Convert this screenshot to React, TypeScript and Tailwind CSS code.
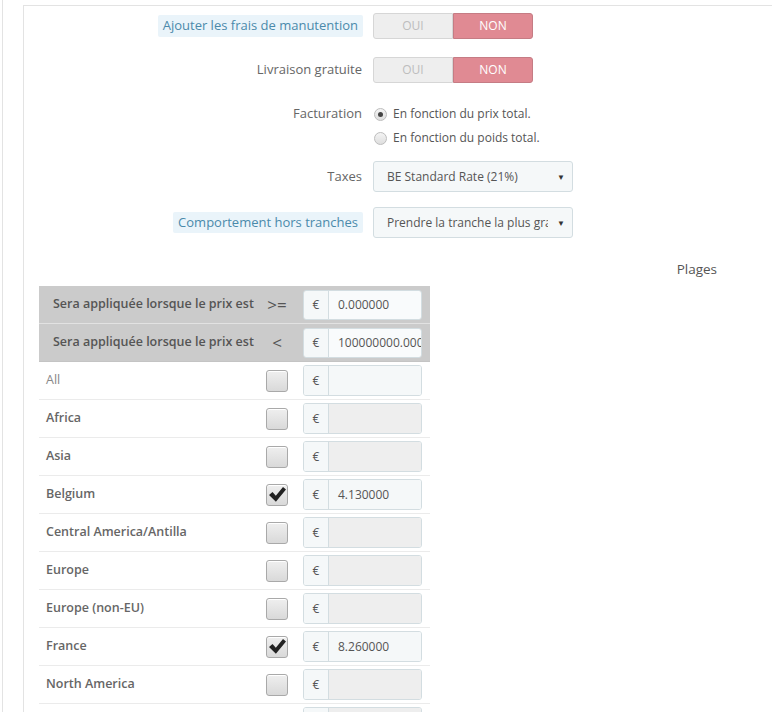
import React from "react";

type Zone = { name: string; bold: boolean; checked: boolean; value: string; disabled: boolean };

const zones: Zone[] = [
  { name: "All", bold: false, checked: false, value: "", disabled: false },
  { name: "Africa", bold: true, checked: false, value: "", disabled: true },
  { name: "Asia", bold: true, checked: false, value: "", disabled: true },
  { name: "Belgium", bold: true, checked: true, value: "4.130000", disabled: false },
  { name: "Central America/Antilla", bold: true, checked: false, value: "", disabled: true },
  { name: "Europe", bold: true, checked: false, value: "", disabled: true },
  { name: "Europe (non-EU)", bold: true, checked: false, value: "", disabled: true },
  { name: "France", bold: true, checked: true, value: "8.260000", disabled: false },
  { name: "North America", bold: true, checked: false, value: "", disabled: true },
  { name: "Oceania", bold: true, checked: false, value: "", disabled: true },
];

const Toggle = () => (
  <div className="flex h-[26px] w-[160px] text-[12px]">
    <div className="flex w-[80px] items-center justify-center rounded-l-[3px] border border-[#d6d6d6] bg-[#eeeeee] text-[#bdbdbd]">
      OUI
    </div>
    <div className="flex w-[80px] items-center justify-center rounded-r-[3px] border border-[#c57c84] bg-[#e08a93] text-white">
      NON
    </div>
  </div>
);

const Radio = ({ on }: { on?: boolean }) => (
  <span className="flex h-[13px] w-[13px] items-center justify-center rounded-full border border-[#bdbdbd] bg-gradient-to-b from-[#f4f4f4] to-[#dedede]">
    {on && <span className="h-[5px] w-[5px] rounded-full bg-[#444]" />}
  </span>
);

const Select = ({ text }: { text: string }) => (
  <div className="flex h-[31px] w-[200px] items-center rounded-[3px] border border-[#d3dde1] bg-[#f5f8f9] pl-[13px] pr-[7px] text-[12px] text-[#555]">
    <span className="w-[161px] overflow-hidden whitespace-nowrap">{text}</span>
    <span className="ml-auto text-[8px] text-[#333]">▼</span>
  </div>
);

const Check = ({ on }: { on: boolean }) => (
  <div className="flex h-[22px] w-[22px] items-center justify-center rounded-[3px] border border-[#a9a9a9] bg-gradient-to-b from-[#efefef] to-[#d9d9d9] shadow-[inset_0_1px_0_#fff]">
    {on && (
      <svg width="19" height="17" viewBox="0 0 19 17">
        <path d="M1 9 L4.5 6 L7.8 9.8 L15 1 L18 3.6 L7.9 15.8 Z" fill="#222" />
      </svg>
    )}
  </div>
);

const Price = ({ value, bg, h }: { value: string; bg: string; h: string }) => (
  <div className={`flex ${h} w-[119px] overflow-hidden rounded-[3px] border border-[#d3dde1] text-[12px] text-[#555]`}>
    <span className="flex w-[25px] shrink-0 items-center justify-center border-r border-[#d3dde1] bg-[#f5f8f9]">€</span>
    <span className={`flex flex-1 items-center overflow-hidden whitespace-nowrap pl-[9px] ${bg}`}>{value}</span>
  </div>
);

const FormRow = ({ label, hint, children, cls }: { label: string; hint?: boolean; children: React.ReactNode; cls: string }) => (
  <div className={`flex items-center ${cls}`}>
    <div className="flex w-[339px] justify-end text-[13px]">
      {hint ? (
        <span className="rounded-[2px] bg-[#eaf4fa] px-[5px] py-[1px] text-[#4a8aab]">{label}</span>
      ) : (
        <span className="pr-[1px] text-[#666]">{label}</span>
      )}
    </div>
    <div className="ml-[10px]">{children}</div>
  </div>
);

export default function App() {
  return (
    <div
      className="flex h-[712px] w-[772px] overflow-hidden bg-white"
      style={{ fontFamily: '"Open Sans", "Liberation Sans", sans-serif' }}
    >
      <div className="w-[2px] shrink-0" />
      <div className="flex flex-1 border-l border-[#e3e3e3] pl-[20px]">
        <div className="mt-[5px] flex-1 border-l border-t border-[#e3e3e3]">
          <FormRow label="Ajouter les frais de manutention" hint cls="mt-[7px] h-[26px]">
            <Toggle />
          </FormRow>
          <FormRow label="Livraison gratuite" cls="mt-[18px] h-[26px]">
            <Toggle />
          </FormRow>

          <div className="mt-[19px] flex">
            <div className="flex h-[24px] w-[339px] items-center justify-end text-[13px] text-[#666]">
              <span className="pr-[1px]">Facturation</span>
            </div>
            <div className="ml-[11px] text-[12px] text-[#555]">
              <div className="flex h-[24px] items-center gap-[6px]">
                <Radio on />
                <span>En fonction du prix total.</span>
              </div>
              <div className="flex h-[24px] items-center gap-[6px]">
                <Radio />
                <span>En fonction du poids total.</span>
              </div>
            </div>
          </div>

          <FormRow label="Taxes" cls="mt-[11px] h-[31px]">
            <Select text="BE Standard Rate (21%)" />
          </FormRow>
          <FormRow label="Comportement hors tranches" hint cls="mt-[15px] h-[31px]">
            <Select text="Prendre la tranche la plus grande" />
          </FormRow>

          <div className="mt-[22px] flex h-[18px] items-center justify-end pr-[55px] text-[13.5px] text-[#555]">
            Plages
          </div>

          <div className="ml-[15px] mt-[8px] w-[391px]">
            {[">=", "<"].map((op, i) => (
              <div
                key={op}
                className={`flex h-[38px] items-center border-b bg-[#cbcbcb] ${i === 0 ? "border-[#e2e2e2]" : "border-[#c4c4c4]"}`}
              >
                <div className="w-[219px] pl-[14px] text-[12.5px] font-semibold text-[#555]">
                  Sera appliquée lorsque le prix est
                </div>
                <div className="flex w-[38px] justify-center text-[17px] text-[#555]">{op}</div>
                <div className="ml-[7px]">
                  <Price value={i === 0 ? "0.000000" : "100000000.000000"} bg="bg-[#f9fbfc]" h="h-[30px]" />
                </div>
              </div>
            ))}
            {zones.map((z) => (
              <div key={z.name} className="flex h-[38px] items-center border-b border-[#ebebeb]">
                <div
                  className={`w-[219px] pl-[7px] text-[12.5px] ${z.bold ? "font-semibold text-[#666]" : "text-[#888]"}`}
                >
                  {z.name}
                </div>
                <div className="flex w-[38px] justify-center">
                  <Check on={z.checked} />
                </div>
                <div className="ml-[7px]">
                  <Price value={z.value} bg={z.disabled ? "bg-[#eeeeee]" : "bg-[#f5f8f9]"} h="h-[31px]" />
                </div>
              </div>
            ))}
          </div>
        </div>
      </div>
    </div>
  );
}
